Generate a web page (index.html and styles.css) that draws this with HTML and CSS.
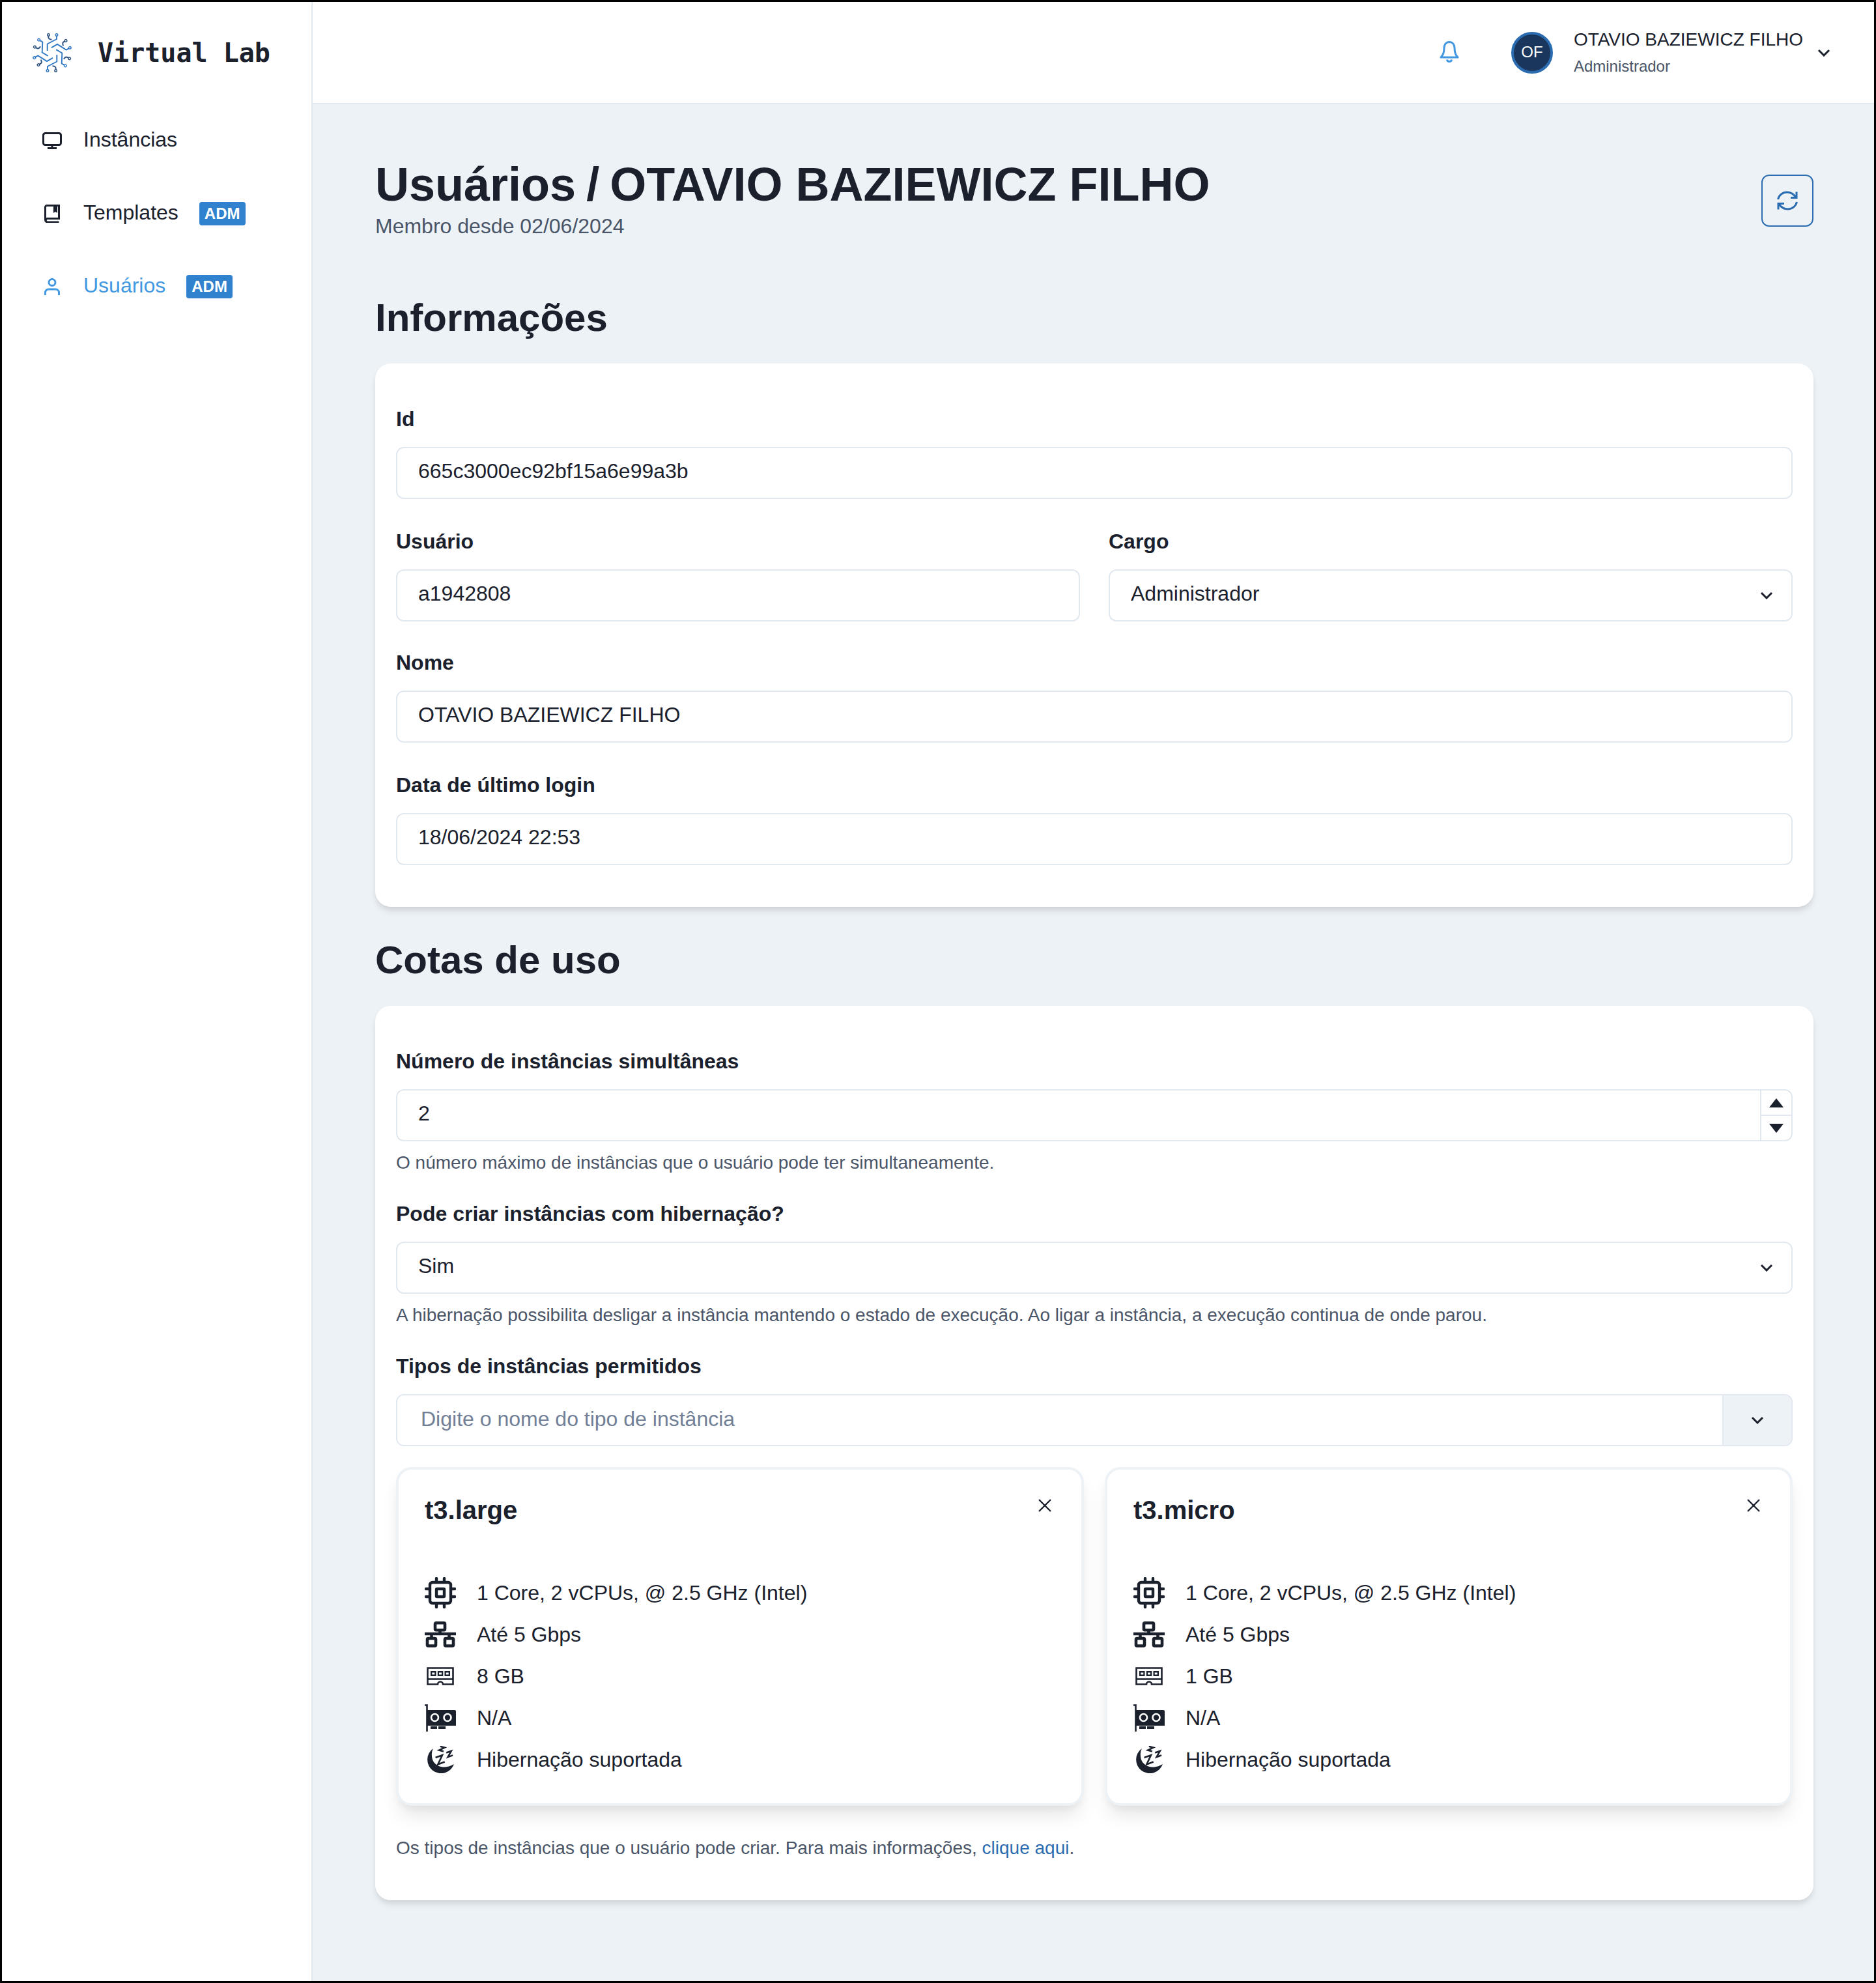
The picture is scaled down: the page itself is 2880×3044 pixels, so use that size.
FILE: index.html
```html
<!DOCTYPE html>
<html lang="pt-BR">
<head>
    <meta charset="UTF-8">
    <title>Virtual Lab</title>
    <link rel="stylesheet" href="styles.css">
</head>
<body>
<!-- icons used more than once -->
<svg class="sprite" xmlns="http://www.w3.org/2000/svg">
    <symbol id="i-chevron" viewBox="0 0 20 12">
        <path d="M2 2l8 8 8-8" fill="none" stroke="currentColor" stroke-width="3"/>
    </symbol>
    <symbol id="i-close" viewBox="0 0 20 20">
        <path d="M1 1l18 18M19 1L1 19" fill="none" stroke="currentColor" stroke-width="2.4"/>
    </symbol>
    <symbol id="i-cpu" viewBox="0 0 48 48">
        <g fill="none" stroke="currentColor" stroke-linecap="round" stroke-width="4.4">
            <rect x="8" y="8" width="32" height="32" rx="4"/>
            <rect x="18" y="18" width="12" height="12" rx="1"/>
            <path d="M18 2v5M30 2v5M18 41v5M30 41v5M2 18h5M2 30h5M41 18h5M41 30h5"/>
        </g>
    </symbol>
    <symbol id="i-net" viewBox="0 0 48 40">
        <g fill="none" stroke="currentColor" stroke-width="4.6">
            <rect x="16" y="2.300" width="15" height="11" rx="1.5"/>
            <rect x="4" y="26" width="13" height="11.500" rx="1.5"/>
            <rect x="31" y="26" width="13" height="11.500" rx="1.5"/>
            <path d="M0 19h48M23.500 13v6M10.500 19v7M37.500 19v7"/>
        </g>
    </symbol>
    <symbol id="i-ram" viewBox="0 0 42 28">
        <path d="M1.500 1.500h39v25H25a4 4 0 0 0-8 0H1.500zM1.500 18.500h39" fill="none" stroke="currentColor" stroke-width="2.600"/>
        <path d="M6 6h8.500v8H6zM16.800 6h8.500v8h-8.500zM27.500 6H36v8h-8.500z" fill="currentColor"/>
        <path d="M8.300 8.500h4v3h-4zM19 8.500h4v3h-4zM29.700 8.500h4v3h-4z" fill="#fff"/>
    </symbol>
    <symbol id="i-gpu" viewBox="0 0 48 42">
        <path d="M0 1.500h3.500V42" fill="none" stroke="currentColor" stroke-width="2.600"/>
        <path d="M3.500 9H46a2 2 0 0 1 2 2v22H3.500z" fill="currentColor"/>
        <circle cx="15.500" cy="20.500" r="5.500" fill="none" stroke="#fff" stroke-width="2.600"/>
        <circle cx="35" cy="20.500" r="5.500" fill="none" stroke="#fff" stroke-width="2.600"/>
        <path d="M9 34h10v4H9zM21 34h11v4H21z" fill="currentColor"/>
    </symbol>
    <symbol id="i-moon" viewBox="0 0 42 42">
        <path d="M10 4A21 21 0 1 0 42 28C30 35 18 34 11 25 7 19 7 10 10 4z" fill="currentColor"/>
        <g fill="none" stroke="currentColor" stroke-width="2.600">
            <path d="M15 16h11l-11 11h11" transform="rotate(-20 20 21)"/>
            <path d="M31 9h8l-8 7h8" transform="rotate(-20 35 12)"/>
            <path d="M20 1.500h7l-7 6h7" transform="rotate(15 23 4)"/>
        </g>
    </symbol>
    <symbol id="i-arm" viewBox="0 0 62 62">
        <path d="M38 3.500v6.500L23.700 17.500V28" fill="none" stroke="#2f78c4" stroke-width="1.900"/>
        <circle cx="38" cy="3.500" r="1.800" fill="#fff" stroke="#2f78c4" stroke-width="1.400"/>
        <path d="M25.400 3.500v4c0 2 2.500 3 5 3.300" fill="none" stroke="#2c5282" stroke-width="1.900"/>
        <circle cx="25.400" cy="3.500" r="1.800" fill="#fff" stroke="#2c5282" stroke-width="1.400"/>
    </symbol>
</svg>

<div class="app">
    <aside class="sidebar">
        <div class="brand">
            <svg class="brand-logo" viewBox="0 0 62 62" xmlns="http://www.w3.org/2000/svg">
                <use href="#i-arm"/>
                <use href="#i-arm" transform="rotate(60 31 31)"/>
                <use href="#i-arm" transform="rotate(120 31 31)"/>
                <use href="#i-arm" transform="rotate(180 31 31)"/>
                <use href="#i-arm" transform="rotate(240 31 31)"/>
                <use href="#i-arm" transform="rotate(300 31 31)"/>
            </svg>
            <span class="brand-name">Virtual Lab</span>
        </div>
        <nav class="nav">
            <a class="nav-item" href="#">
                <span class="nav-icon">
                    <svg width="30" height="26" viewBox="0 0 30 26" fill="none" stroke="currentColor" stroke-width="3"><rect x="1.500" y="1.500" width="27" height="18" rx="3"/><path d="M15 20v4.500M8 24.500h14"/></svg>
                </span>
                Instâncias
            </a>
            <a class="nav-item" href="#">
                <span class="nav-icon">
                    <svg width="24" height="28" viewBox="0 0 24 28"><path d="M22.500 27H5a3.500 3.500 0 0 1-3.500-3.500V4A2.500 2.500 0 0 1 4 1.500h18.500v20H5a2.700 2.700 0 0 0 0 5.500" fill="none" stroke="currentColor" stroke-width="3"/><path d="M14 2h6v11l-3-2-3 2z" fill="currentColor"/></svg>
                </span>
                Templates
                <span class="badge">ADM</span>
            </a>
            <a class="nav-item active" href="#">
                <span class="nav-icon">
                    <svg width="24" height="26" viewBox="0 0 24 26" fill="none" stroke="currentColor" stroke-width="3"><circle cx="12" cy="6.500" r="5"/><path d="M1.500 26v-4a5 5 0 0 1 5-5h11a5 5 0 0 1 5 5v4"/></svg>
                </span>
                Usuários
                <span class="badge">ADM</span>
            </a>
        </nav>
    </aside>

    <div class="body-col">
        <header class="topbar">
            <svg class="bell" width="30" height="34" viewBox="0 0 30 34" fill="none" stroke="currentColor" stroke-width="3" stroke-linejoin="round"><path d="M15 1.500c-5 0-8 4-8 9 0 8-2 11-5 14.500h26c-3-3.500-5-6.500-5-14.500 0-5-3-9-8-9z"/><path d="M11.500 28.500c.5 4 6.500 4 7 0"/></svg>
            <div class="avatar">OF</div>
            <div class="user">
                <div class="user-name">OTAVIO BAZIEWICZ FILHO</div>
                <div class="user-role">Administrador</div>
            </div>
            <svg class="user-chevron"><use href="#i-chevron"/></svg>
        </header>

        <main class="main">
            <div class="page-head">
                <div>
                    <h1>Usuários <span class="crumb-sep">/</span> OTAVIO BAZIEWICZ FILHO</h1>
                    <div class="subtitle">Membro desde 02/06/2024</div>
                </div>
                <button class="refresh" type="button">
                    <svg width="34" height="30" viewBox="0 0 34 30" fill="none" stroke="currentColor" stroke-width="3"><path d="M2.500 13C4 6.500 9.500 2 16.500 2c6 0 10 3 13.500 7.500"/><path d="M31 1.500v9H22"/><path d="M31.500 17C30 23.500 24.500 28 17.500 28c-6 0-10-3-13.500-7.500"/><path d="M3 28.500v-9h9"/></svg>
                </button>
            </div>

            <h2>Informações</h2>
            <section class="card">
                <div class="field">
                    <label>Id</label>
                    <input class="input" type="text" value="665c3000ec92bf15a6e99a3b">
                </div>
                <div class="field-row">
                    <div class="field">
                        <label>Usuário</label>
                        <input class="input" type="text" value="a1942808">
                    </div>
                    <div class="field">
                        <label>Cargo</label>
                        <div class="select-wrap">
                            <select class="input"><option>Administrador</option></select>
                            <svg class="select-arrow"><use href="#i-chevron"/></svg>
                        </div>
                    </div>
                </div>
                <div class="field">
                    <label>Nome</label>
                    <input class="input" type="text" value="OTAVIO BAZIEWICZ FILHO">
                </div>
                <div class="field">
                    <label>Data de último login</label>
                    <input class="input" type="text" value="18/06/2024 22:53">
                </div>
            </section>

            <h2 class="second">Cotas de uso</h2>
            <section class="card">
                <div class="field">
                    <label>Número de instâncias simultâneas</label>
                    <div class="number-wrap">
                        <input class="input" type="number" value="2">
                        <div class="stepper">
                            <span class="step"><i class="tri-up"></i></span>
                            <span class="step"><i class="tri-down"></i></span>
                        </div>
                    </div>
                    <p class="help">O número máximo de instâncias que o usuário pode ter simultaneamente.</p>
                </div>
                <div class="field">
                    <label>Pode criar instâncias com hibernação?</label>
                    <div class="select-wrap">
                        <select class="input"><option>Sim</option></select>
                        <svg class="select-arrow"><use href="#i-chevron"/></svg>
                    </div>
                    <p class="help">A hibernação possibilita desligar a instância mantendo o estado de execução. Ao ligar a instância, a execução continua de onde parou.</p>
                </div>
                <div class="field">
                    <label>Tipos de instâncias permitidos</label>
                    <div class="combo">
                        <input class="combo-input" type="text" placeholder="Digite o nome do tipo de instância">
                        <span class="combo-btn"><svg class="combo-arrow"><use href="#i-chevron"/></svg></span>
                    </div>
                </div>

                <div class="tags">
                    <div class="tag">
                        <div class="tag-head">
                            <span class="tag-title">t3.large</span>
                            <svg class="tag-close"><use href="#i-close"/></svg>
                        </div>
                        <ul class="specs">
                            <li><span class="spec-icon"><svg width="48" height="48"><use href="#i-cpu"/></svg></span>1 Core, 2 vCPUs, @ 2.5 GHz (Intel)</li>
                            <li><span class="spec-icon"><svg width="48" height="40"><use href="#i-net"/></svg></span>Até 5 Gbps</li>
                            <li><span class="spec-icon"><svg width="42" height="28"><use href="#i-ram"/></svg></span>8 GB</li>
                            <li><span class="spec-icon"><svg width="48" height="42"><use href="#i-gpu"/></svg></span>N/A</li>
                            <li><span class="spec-icon"><svg width="42" height="42"><use href="#i-moon"/></svg></span>Hibernação suportada</li>
                        </ul>
                    </div>
                    <div class="tag">
                        <div class="tag-head">
                            <span class="tag-title">t3.micro</span>
                            <svg class="tag-close"><use href="#i-close"/></svg>
                        </div>
                        <ul class="specs">
                            <li><span class="spec-icon"><svg width="48" height="48"><use href="#i-cpu"/></svg></span>1 Core, 2 vCPUs, @ 2.5 GHz (Intel)</li>
                            <li><span class="spec-icon"><svg width="48" height="40"><use href="#i-net"/></svg></span>Até 5 Gbps</li>
                            <li><span class="spec-icon"><svg width="42" height="28"><use href="#i-ram"/></svg></span>1 GB</li>
                            <li><span class="spec-icon"><svg width="48" height="42"><use href="#i-gpu"/></svg></span>N/A</li>
                            <li><span class="spec-icon"><svg width="42" height="42"><use href="#i-moon"/></svg></span>Hibernação suportada</li>
                        </ul>
                    </div>
                </div>
                <p class="help tags-help">Os tipos de instâncias que o usuário pode criar. Para mais informações, <a href="#">clique aqui</a>.</p>
            </section>
        </main>
    </div>
</div>
</body>
</html>
```

FILE: styles.css
```css
* {
    box-sizing: border-box;
}

html, body {
    margin: 0;
    height: 100%;
}

body {
    font-family: "Liberation Sans", Arial, sans-serif;
    font-size: 32px;
    color: #1a202c;
    background: #edf2f7;
    border: 3px solid #000;
    text-rendering: optimizeLegibility;
}

.sprite {
    display: none;
}

.app {
    display: flex;
    min-height: 100%;
}

/* Sidebar */
.sidebar {
    flex: 0 0 477px;
    background: #fff;
    border-right: 2px solid #e2e8f0;
}

.brand {
    display: flex;
    align-items: center;
    height: 155px;
    padding-left: 46px;
    gap: 39px;
}

.brand-logo {
    width: 62px;
    height: 62px;
}

.brand-name {
    font-family: "DejaVu Sans Mono", "Liberation Mono", monospace;
    font-size: 40px;
    font-weight: bold;
}

.nav-item {
    display: flex;
    align-items: center;
    height: 112px;
    padding-left: 53px;
    color: #1a202c;
    text-decoration: none;
}

.nav-item.active {
    color: #4299e1;
}

.nav-icon {
    display: flex;
    justify-content: center;
    width: 48px;
    margin-top: 4px;
    margin-right: 24px;
}

.badge {
    margin-top: 4px;
    margin-left: 32px;
    padding: 0 8px;
    background: #3182ce;
    border-radius: 4px;
    color: #fff;
    font-size: 24px;
    font-weight: bold;
    line-height: 36px;
}

/* Top bar */
.body-col {
    flex: 1;
    min-width: 0;
}

.topbar {
    display: flex;
    align-items: center;
    height: 157px;
    padding-right: 67px;
    background: #fff;
    border-bottom: 2px solid #e2e8f0;
}

.bell {
    margin-left: auto;
    margin-right: 80px;
    margin-bottom: 2px;
    color: #4299e1;
}

.avatar {
    display: flex;
    align-items: center;
    justify-content: center;
    width: 64px;
    height: 64px;
    margin-right: 32px;
    padding-bottom: 2px;
    border: 4px solid #2b6cb0;
    border-radius: 50%;
    background: #1a365d;
    color: #fff;
    font-size: 24px;
}

.user {
    padding-bottom: 2px;
}

.user-name {
    margin-bottom: 2px;
    font-size: 28px;
    line-height: 42px;
}

.user-role {
    font-size: 24px;
    line-height: 36px;
    color: #4a5568;
}

.user-chevron {
    width: 20px;
    height: 12px;
    margin-left: 22px;
}

/* Main */
.main {
    padding: 83px 93px 0 96px;
}

.page-head {
    display: flex;
    align-items: center;
    justify-content: space-between;
    margin-bottom: 81px;
}

h1 {
    margin: 0;
    font-size: 72px;
    line-height: 80px;
}

.crumb-sep {
    margin: 0 -4px;
}

.subtitle {
    line-height: 48px;
    color: #4a5568;
}

.refresh {
    display: flex;
    align-items: center;
    justify-content: center;
    width: 80px;
    height: 80px;
    margin-top: 2px;
    padding: 0;
    border: 2px solid #2b6cb0;
    border-radius: 12px;
    background: transparent;
    color: #2b6cb0;
}

h2 {
    margin: 0 0 34px;
    font-size: 60px;
    line-height: 72px;
}

h2.second {
    margin-top: 46px;
}

.card {
    padding: 61px 32px 64px;
    background: #fff;
    border-radius: 24px;
    box-shadow: 0 8px 12px -2px rgba(0, 0, 0, 0.1), 0 4px 8px -2px rgba(0, 0, 0, 0.06);
}

.field {
    margin-bottom: 41px;
    flex: 1;
}

.card > .field:last-child {
    margin-bottom: 0;
}

.field label {
    display: block;
    margin-bottom: 19px;
    font-weight: bold;
    line-height: 48px;
}

.field-row {
    display: flex;
    gap: 44px;
    margin-bottom: -2px;
}

.input {
    display: block;
    width: 100%;
    height: 80px;
    padding: 0 32px 6px;
    border: 2px solid #e2e8f0;
    border-radius: 12px;
    outline: none;
    appearance: none;
    background: #fff;
    color: #1a202c;
    font-family: inherit;
    font-size: 32px;
}

.select-wrap, .number-wrap {
    position: relative;
}

.select-arrow {
    position: absolute;
    top: 34px;
    right: 30px;
    width: 20px;
    height: 12px;
    pointer-events: none;
}

.input[type=number]::-webkit-inner-spin-button {
    display: none;
}

.stepper {
    position: absolute;
    top: 2px;
    right: 2px;
    bottom: 2px;
    display: flex;
    flex-direction: column;
    width: 48px;
    border-left: 2px solid #e2e8f0;
}

.step {
    flex: 1;
    display: flex;
    align-items: center;
    justify-content: center;
}

.step + .step {
    border-top: 2px solid #e2e8f0;
}

.tri-up, .tri-down {
    width: 0;
    height: 0;
    border-left: 11px solid transparent;
    border-right: 11px solid transparent;
}

.tri-up {
    border-bottom: 14px solid #1a202c;
}

.tri-down {
    border-top: 14px solid #1a202c;
}

.help {
    margin: 12px 0 -8px;
    font-size: 28px;
    line-height: 42px;
    color: #4a5568;
}

.help a {
    color: #2b6cb0;
    text-decoration: none;
}

.combo {
    display: flex;
    height: 80px;
    border: 2px solid #e2e8f0;
    border-radius: 12px;
    overflow: hidden;
}

.combo-input {
    flex: 1;
    min-width: 0;
    padding: 0 36px 4px;
    border: 0;
    outline: none;
    font-family: inherit;
    font-size: 32px;
}

.combo-input::placeholder {
    color: #718096;
    opacity: 1;
}

.combo-btn {
    display: flex;
    align-items: center;
    justify-content: center;
    width: 106px;
    background: #edf2f7;
    border-left: 2px solid #e2e8f0;
}

.combo-arrow {
    width: 20px;
    height: 12px;
}

/* Instance type cards */
.tags {
    display: grid;
    grid-template-columns: 1fr 1fr;
    gap: 32px;
    margin-top: -9px;
}

.tag {
    padding: 32px 40px 35px;
    background: #fff;
    border: 4px solid #edf2f7;
    border-radius: 24px;
    box-shadow: 0 20px 30px -6px rgba(0, 0, 0, 0.1), 0 8px 12px -4px rgba(0, 0, 0, 0.05);
}

.tag-head {
    display: flex;
    justify-content: space-between;
    height: 125px;
}

.tag-title {
    font-size: 40px;
    font-weight: bold;
    line-height: 60px;
}

.tag-close {
    width: 20px;
    height: 20px;
    margin: 13px 6px 0 0;
}

.specs {
    margin: 0;
    padding: 0;
    list-style: none;
}

.specs li {
    display: flex;
    align-items: center;
    height: 64px;
}

.spec-icon {
    display: flex;
    align-items: center;
    justify-content: center;
    width: 48px;
    margin-right: 32px;
}

.tags-help {
    margin: 44px 0 -5px;
}
```
